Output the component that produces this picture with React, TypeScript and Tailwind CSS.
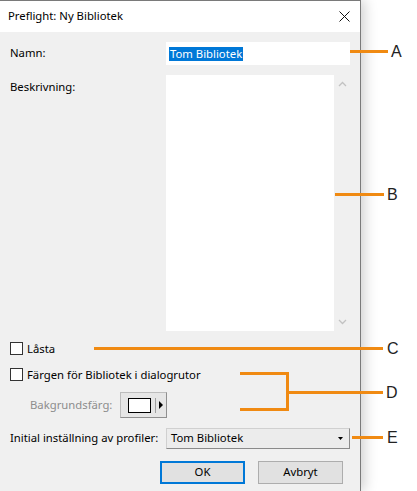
import React from "react";

const font = { fontFamily: '"Noto Sans", "Open Sans", sans-serif' };

function Checkbox({ label }: { label: string }) {
  return (
    <label className="flex items-center gap-[4px] h-[13px]">
      <span className="w-[13px] h-[13px] bg-white border border-[#333333] shrink-0" />
      <span className="text-[11.3px] text-black leading-none">{label}</span>
    </label>
  );
}

function Callouts() {
  const line = "absolute bg-[#f08a12]";
  const letter = "absolute text-[16px] leading-none text-[#222222]";
  return (
    <div className="absolute inset-0 pointer-events-none" style={{ fontFamily: '"Liberation Sans", sans-serif' }}>
      {/* A */}
      <div className={`${line} left-[350px] top-[50px] w-[38px] h-[3px]`} />
      <span className={`${letter} left-[391px] top-[44px]`}>A</span>
      {/* B */}
      <div className={`${line} left-[335px] top-[193px] w-[49px] h-[3px]`} />
      <span className={`${letter} left-[387px] top-[187px]`}>B</span>
      {/* C */}
      <div className={`${line} left-[94px] top-[347px] w-[289px] h-[3px]`} />
      <span className={`${letter} left-[387px] top-[341px]`}>C</span>
      {/* D bracket */}
      <div className={`${line} left-[240px] top-[372px] w-[49px] h-[3px]`} />
      <div className={`${line} left-[240px] top-[408px] w-[49px] h-[3px]`} />
      <div className={`${line} left-[286px] top-[372px] w-[3px] h-[39px]`} />
      <div className={`${line} left-[289px] top-[391px] w-[94px] h-[3px]`} />
      <span className={`${letter} left-[386px] top-[385px]`}>D</span>
      {/* E */}
      <div className={`${line} left-[352px] top-[436px] w-[31px] h-[3px]`} />
      <span className={`${letter} left-[387px] top-[430px]`}>E</span>
    </div>
  );
}

export default function App() {
  return (
    <div className="relative w-[417px] h-[491px] bg-white overflow-hidden" style={font}>
      <div className="w-[361px] h-full border-t border-r border-[#7a7a7a] shadow-[4px_0_12px_rgba(0,0,0,0.18)] flex flex-col">
        {/* title bar */}
        <div className="h-[31px] bg-white flex items-center justify-between pl-[8px] pr-[9px] shrink-0">
          <span className="text-[11.3px] text-black">Preflight: Ny Bibliotek</span>
          <svg width="11" height="11" viewBox="0 0 11 11" className="mr-[1px]">
            <path d="M0.5 0.5 L10.5 10.5 M10.5 0.5 L0.5 10.5" stroke="#111" strokeWidth="1" />
          </svg>
        </div>

        {/* body */}
        <div className="flex-1 bg-[#f0f0f0] pl-[10px] pr-[10px] pt-[10px] flex flex-col">
          <div className="flex items-center h-[23px]">
            <span className="w-[156px] shrink-0 text-[11.3px] text-black">Namn:</span>
            <div className="w-[184px] h-[23px] bg-white flex items-center pl-[3px]">
              <span className="bg-[#0078d7] text-white text-[11.3px] leading-[14px] px-[1px]">Tom Bibliotek</span>
            </div>
          </div>

          <div className="flex mt-[10px]">
            <span className="w-[156px] shrink-0 text-[11.3px] text-black pt-[4px]">Beskrivning:</span>
            <div className="w-[184px] h-[256px] flex">
              <div className="w-[168px] h-full bg-white" />
              <div className="w-[16px] h-full flex flex-col items-center justify-between py-[6px]">
                <svg width="9" height="6" viewBox="0 0 9 6">
                  <path d="M1 5 L4.5 1.5 L8 5" fill="none" stroke="#c2c2c2" strokeWidth="1.3" />
                </svg>
                <svg width="9" height="6" viewBox="0 0 9 6">
                  <path d="M1 1 L4.5 4.5 L8 1" fill="none" stroke="#c2c2c2" strokeWidth="1.3" />
                </svg>
              </div>
            </div>
          </div>

          <div className="mt-[11px]">
            <Checkbox label="Låsta" />
          </div>
          <div className="mt-[13px]">
            <Checkbox label="Färgen för Bibliotek i dialogrutor" />
          </div>

          <div className="flex items-center mt-[11px] h-[26px]">
            <span className="w-[110px] shrink-0 pl-[20px] text-[11.3px] text-[#8d8d8d]">Bakgrundsfärg:</span>
            <div className="w-[47px] h-[26px] bg-[#e6e6e6] border border-[#bdbdbd] border-r-[#8f8f8f] border-b-[#8f8f8f] flex items-center pl-[7px]">
              <span className="w-[23px] h-[15px] bg-white border border-black" />
              <span className="w-[1px] h-[15px] bg-[#a0a0a0] ml-[4px]" />
              <svg width="5" height="8" viewBox="0 0 5 8" className="ml-[3px]">
                <path d="M0 0 L4 4 L0 8 Z" fill="#000" />
              </svg>
            </div>
          </div>

          <div className="flex items-center mt-[10px] h-[21px]">
            <span className="w-[156px] shrink-0 text-[11.3px] text-black whitespace-nowrap">Initial inställning av profiler:</span>
            <div className="w-[186px] h-[21px] bg-[#ececec] border border-[#d0d0d0] border-r-[#8a8a8a] border-b-[#8a8a8a] flex items-center justify-between pl-[4px] pr-[6px]">
              <span className="text-[11.3px] text-black">Tom Bibliotek</span>
              <svg width="5" height="3" viewBox="0 0 5 3">
                <path d="M0 0 L5 0 L2.5 3 Z" fill="#000" />
              </svg>
            </div>
          </div>

          <div className="flex mt-[12px] pl-[150px] gap-[13px]">
            <button className="w-[85px] h-[23px] bg-[#e1e1e1] border-2 border-[#0078d7] text-[11.3px] text-black">OK</button>
            <button className="w-[85px] h-[23px] bg-[#e1e1e1] border border-[#adadad] text-[11.3px] text-black">Avbryt</button>
          </div>
        </div>
      </div>
      <Callouts />
    </div>
  );
}
